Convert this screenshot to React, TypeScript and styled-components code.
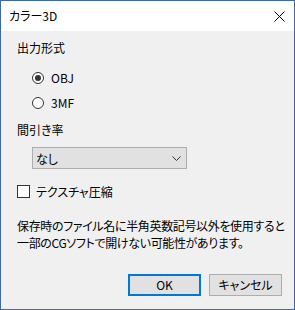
import * as React from "react";
import styled, { createGlobalStyle } from "styled-components";

const GlobalStyle = createGlobalStyle`
  html, body {
    margin: 0;
    padding: 0;
    background: #ffffff;
  }
  body {
    font-family: "Noto Sans CJK JP", "Noto Sans", sans-serif;
    font-size: 12px;
    color: #000000;
    font-feature-settings: "palt";
  }
`;

const Window = styled.div`
  width: 295px;
  height: 310px;
  box-sizing: border-box;
  border: 1px solid #3d6aa6;
  background: #f0f0f0;
  display: flex;
  flex-direction: column;
`;

const TitleBar = styled.div`
  height: 30px;
  background: #ffffff;
  display: flex;
  align-items: center;
  justify-content: space-between;
  padding: 0 9px 0 8px;
`;

const Title = styled.span`
  font-size: 12px;
  line-height: 16px;
`;

const Body = styled.div`
  padding: 9px 12px 0 16px;
  display: flex;
  flex-direction: column;
`;

const Label = styled.div<{ gap: number }>`
  line-height: 16px;
  margin-top: ${(p) => p.gap}px;
`;

const Options = styled.div`
  display: flex;
  flex-direction: column;
  margin-top: 9px;
  padding-left: 15px;
`;

const OptionRow = styled.label`
  height: 25px;
  display: flex;
  align-items: center;
  gap: 7px;
`;

const RadioMark = styled.span<{ checked?: boolean }>`
  width: 12px;
  height: 12px;
  box-sizing: border-box;
  border-radius: 50%;
  border: 1px solid #333333;
  background: #ffffff;
  display: flex;
  align-items: center;
  justify-content: center;
  &::after {
    content: "";
    width: 6px;
    height: 6px;
    border-radius: 50%;
    background: ${(p) => (p.checked ? "#333333" : "transparent")};
  }
`;

const Select = styled.div`
  margin: 9px 0 0 15px;
  width: 155px;
  height: 22px;
  box-sizing: border-box;
  border: 1px solid #adadad;
  background: #e1e1e1;
  display: flex;
  align-items: center;
  justify-content: space-between;
  padding: 0 5px 0 3px;
`;

const CheckRow = styled.label`
  margin-top: 14px;
  height: 16px;
  display: flex;
  align-items: center;
  gap: 6px;
`;

const CheckMark = styled.span`
  width: 13px;
  height: 13px;
  box-sizing: border-box;
  border: 1px solid #333333;
  background: #ffffff;
`;

const Note = styled.p`
  margin: 18px 0 0;
  line-height: 17px;
  white-space: nowrap;
  letter-spacing: -0.35px;
`;

const Buttons = styled.div`
  margin-top: 23px;
  display: flex;
  justify-content: flex-end;
  gap: 8px;
`;

const Button = styled.button<{ primary?: boolean }>`
  width: 73px;
  height: 22px;
  box-sizing: border-box;
  padding: 0;
  font: inherit;
  line-height: 16px;
  color: #000000;
  background: #e1e1e1;
  border: ${(p) => (p.primary ? "2px solid #0078d7" : "1px solid #adadad")};
`;

const CloseIcon = () => (
  <svg width="11" height="11" viewBox="0 0 11 11">
    <path d="M0.5 0.5 L10.5 10.5 M10.5 0.5 L0.5 10.5" stroke="#000" strokeWidth="1" fill="none" />
  </svg>
);

const Chevron = () => (
  <svg width="9" height="5" viewBox="0 0 9 5">
    <path d="M0.5 0.5 L4.5 4.5 L8.5 0.5" stroke="#333" strokeWidth="1" fill="none" />
  </svg>
);

const App = () => {
  const [format, setFormat] = React.useState("OBJ");

  return (
    <Window>
      <GlobalStyle />
      <TitleBar>
        <Title>カラー3D</Title>
        <CloseIcon />
      </TitleBar>
      <Body>
        <Label gap={0}>出力形式</Label>
        <Options>
          {["OBJ", "3MF"].map((f) => (
            <OptionRow key={f} onClick={() => setFormat(f)}>
              <RadioMark checked={format === f} />
              {f}
            </OptionRow>
          ))}
        </Options>
        <Label gap={7}>間引き率</Label>
        <Select>
          なし
          <Chevron />
        </Select>
        <CheckRow>
          <CheckMark />
          テクスチャ圧縮
        </CheckRow>
        <Note>
          保存時のファイル名に半角英数記号以外を使用すると
          <br />
          一部のCGソフトで開けない可能性があります。
        </Note>
        <Buttons>
          <Button primary>OK</Button>
          <Button>キャンセル</Button>
        </Buttons>
      </Body>
    </Window>
  );
};

export default App;
